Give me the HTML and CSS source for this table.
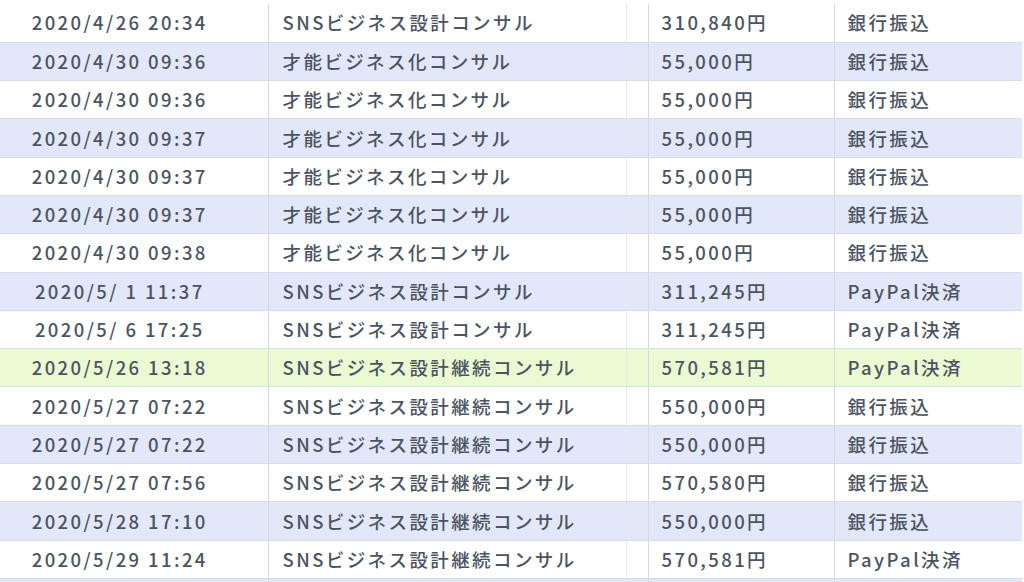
FILE: index.html
```html
<!DOCTYPE html>
<html lang="ja">
<head>
<meta charset="utf-8">
<link rel="stylesheet" href="styles.css">
</head>
<body>
<table class="orders">
  <tbody>
    <tr class="odd"><td class="date">2020/4/26 20:34</td><td class="item">SNSビジネス設計コンサル</td><td class="gap"></td><td class="amount">310,840円</td><td class="pay">銀行振込</td></tr>
    <tr class="even"><td class="date">2020/4/30 09:36</td><td class="item">才能ビジネス化コンサル</td><td class="gap"></td><td class="amount">55,000円</td><td class="pay">銀行振込</td></tr>
    <tr class="odd"><td class="date">2020/4/30 09:36</td><td class="item">才能ビジネス化コンサル</td><td class="gap"></td><td class="amount">55,000円</td><td class="pay">銀行振込</td></tr>
    <tr class="even"><td class="date">2020/4/30 09:37</td><td class="item">才能ビジネス化コンサル</td><td class="gap"></td><td class="amount">55,000円</td><td class="pay">銀行振込</td></tr>
    <tr class="odd"><td class="date">2020/4/30 09:37</td><td class="item">才能ビジネス化コンサル</td><td class="gap"></td><td class="amount">55,000円</td><td class="pay">銀行振込</td></tr>
    <tr class="even"><td class="date">2020/4/30 09:37</td><td class="item">才能ビジネス化コンサル</td><td class="gap"></td><td class="amount">55,000円</td><td class="pay">銀行振込</td></tr>
    <tr class="odd"><td class="date">2020/4/30 09:38</td><td class="item">才能ビジネス化コンサル</td><td class="gap"></td><td class="amount">55,000円</td><td class="pay">銀行振込</td></tr>
    <tr class="even"><td class="date">2020/5/ 1 11:37</td><td class="item">SNSビジネス設計コンサル</td><td class="gap"></td><td class="amount">311,245円</td><td class="pay">PayPal決済</td></tr>
    <tr class="odd"><td class="date">2020/5/ 6 17:25</td><td class="item">SNSビジネス設計コンサル</td><td class="gap"></td><td class="amount">311,245円</td><td class="pay">PayPal決済</td></tr>
    <tr class="hl"><td class="date">2020/5/26 13:18</td><td class="item">SNSビジネス設計継続コンサル</td><td class="gap"></td><td class="amount">570,581円</td><td class="pay">PayPal決済</td></tr>
    <tr class="odd"><td class="date">2020/5/27 07:22</td><td class="item">SNSビジネス設計継続コンサル</td><td class="gap"></td><td class="amount">550,000円</td><td class="pay">銀行振込</td></tr>
    <tr class="even"><td class="date">2020/5/27 07:22</td><td class="item">SNSビジネス設計継続コンサル</td><td class="gap"></td><td class="amount">550,000円</td><td class="pay">銀行振込</td></tr>
    <tr class="odd"><td class="date">2020/5/27 07:56</td><td class="item">SNSビジネス設計継続コンサル</td><td class="gap"></td><td class="amount">570,580円</td><td class="pay">銀行振込</td></tr>
    <tr class="even"><td class="date">2020/5/28 17:10</td><td class="item">SNSビジネス設計継続コンサル</td><td class="gap"></td><td class="amount">550,000円</td><td class="pay">銀行振込</td></tr>
    <tr class="odd"><td class="date">2020/5/29 11:24</td><td class="item">SNSビジネス設計継続コンサル</td><td class="gap"></td><td class="amount">570,581円</td><td class="pay">PayPal決済</td></tr>
    <tr class="even"><td class="date">&nbsp;</td><td class="item"></td><td class="gap"></td><td class="amount"></td><td class="pay"></td></tr>
  </tbody>
</table>
</body>
</html>
```

FILE: styles.css
```css
html, body {
  margin: 0;
  padding: 0;
  background: #ffffff;
  overflow: hidden;
  height: 582px;
}
.orders {
  margin-top: 4px;
  width: 1022px;
  border-collapse: collapse;
  table-layout: fixed;
  font-family: "Noto Sans CJK JP", "Noto Sans", sans-serif;
  font-size: 18.5px;
  font-weight: 500;
  letter-spacing: 2.4px;
  color: #4c5462;
}
.orders td {
  height: 38.3px;
  padding: 0 0 1px 0;
  box-sizing: border-box;
  border-bottom: 1px solid #d7dcea;
  border-left: 1px solid #d4d9e4;
  white-space: pre;
  vertical-align: middle;
  line-height: 20px;
}
.orders td:first-child { border-left: none; }
.orders tr.odd { background: #ffffff; }
.orders tr.even { background: #e2e8fa; }
.orders tr.hl { background: #eafad2; }
.date { width: 268px; text-align: center; padding-right: 28px !important; }
.item { width: 358px; padding-left: 14px !important; }
.gap { width: 22px; border-left-color: #e4e8f2 !important; }
.amount { width: 186px; padding-left: 13px !important; }
.pay { padding-left: 13px !important; }
```
